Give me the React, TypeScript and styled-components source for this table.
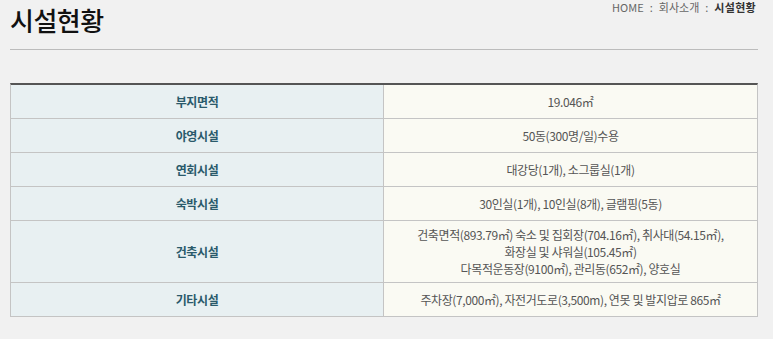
import React from 'react';
import styled, { createGlobalStyle } from 'styled-components';

const GlobalStyle = createGlobalStyle`
  html, body {
    margin: 0;
    padding: 0;
    background: #f1f1f1;
  }
  body {
    font-family: 'Noto Sans CJK KR', 'Noto Sans', sans-serif;
  }
`;

const Page = styled.div`
  width: 748px;
  margin-left: 10px;
`;

const Header = styled.header`
  display: flex;
  justify-content: space-between;
  align-items: flex-start;
  height: 49px;
  border-bottom: 1px solid #bcbcbc;
`;

const Title = styled.h2`
  margin: 0;
  padding-top: 2px;
  font-size: 26px;
  line-height: 36px;
  font-weight: 500;
  letter-spacing: -0.5px;
  color: #111;
`;

const Breadcrumb = styled.div`
  margin-right: 2px;
  padding-top: 1px;
  font-size: 11px;
  line-height: 13px;
  color: #666;
`;

const Sep = styled.span`
  margin: 0 6px;
`;

const Current = styled.strong`
  color: #333;
  font-weight: 700;
  letter-spacing: 0.3px;
`;

const Table = styled.div`
  margin-top: 33px;
  display: grid;
  grid-template-columns: 373px 1fr;
  border-top: 2px solid #555;
  border-left: 1px solid #c4c4c4;
  border-right: 1px solid #c4c4c4;
`;

const Cell = styled.div<{ $label?: boolean }>`
  display: flex;
  align-items: center;
  justify-content: center;
  text-align: center;
  box-sizing: border-box;
  min-height: 34px;
  padding: 5px 10px;
  font-size: 12px;
  line-height: 17px;
  letter-spacing: -0.4px;
  border-bottom: 1px solid #c4c4c4;
  background: ${({ $label }) => ($label ? '#e8f0f2' : '#fafaf3')};
  color: ${({ $label }) => ($label ? '#2a5a6b' : '#555')};
  font-weight: ${({ $label }) => ($label ? 700 : 400)};
  border-right: ${({ $label }) => ($label ? '1px solid #c4c4c4' : 'none')};
`;

const rows: { label: string; value: string[] }[] = [
  { label: '부지면적', value: ['19.046㎡'] },
  { label: '야영시설', value: ['50동(300명/일)수용'] },
  { label: '연회시설', value: ['대강당(1개), 소그룹실(1개)'] },
  { label: '숙박시설', value: ['30인실(1개), 10인실(8개), 글램핑(5동)'] },
  {
    label: '건축시설',
    value: [
      '건축면적(893.79㎡) 숙소 및 집회장(704.16㎡), 취사대(54.15㎡),',
      '화장실 및 샤워실(105.45㎡)',
      '다목적운동장(9100㎡), 관리동(652㎡), 양호실',
    ],
  },
  { label: '기타시설', value: ['주차장(7,000㎡), 자전거도로(3,500m), 연못 및 발지압로 865㎡'] },
];

export default function App() {
  return (
    <>
      <GlobalStyle />
      <Page>
        <Header>
          <Title>시설현황</Title>
          <Breadcrumb>
            HOME<Sep>:</Sep>회사소개<Sep>:</Sep>
            <Current>시설현황</Current>
          </Breadcrumb>
        </Header>
        <Table>
          {rows.map((row) => (
            <React.Fragment key={row.label}>
              <Cell $label>{row.label}</Cell>
              <Cell>
                <div>
                  {row.value.map((line) => (
                    <div key={line}>{line}</div>
                  ))}
                </div>
              </Cell>
            </React.Fragment>
          ))}
        </Table>
      </Page>
    </>
  );
}
